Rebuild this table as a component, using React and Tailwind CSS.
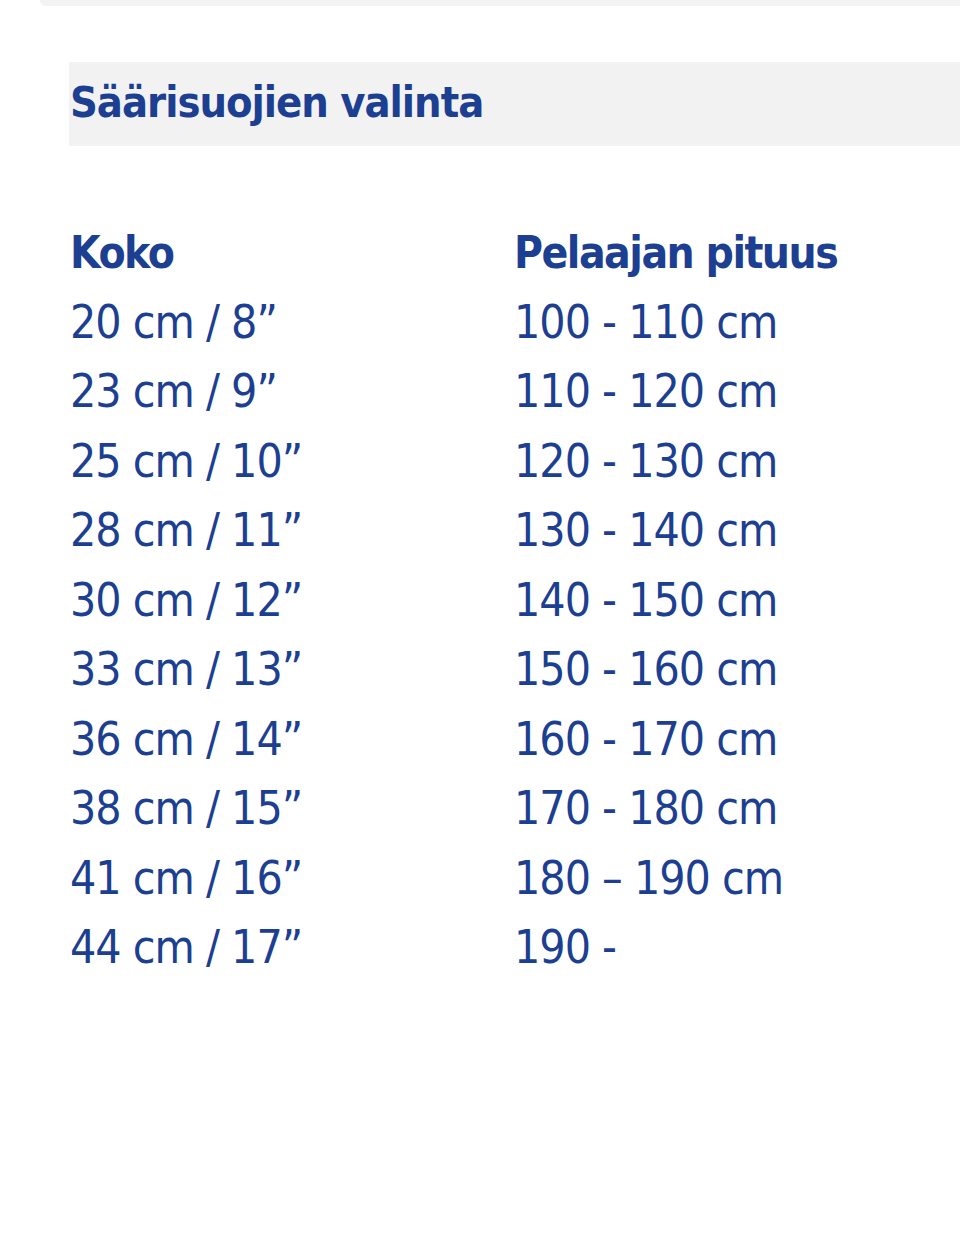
import React from 'react';

const rows = [
  ['20 cm / 8”', '100 - 110 cm'],
  ['23 cm / 9”', '110 - 120 cm'],
  ['25 cm / 10”', '120 - 130 cm'],
  ['28 cm / 11”', '130 - 140 cm'],
  ['30 cm / 12”', '140 - 150 cm'],
  ['33 cm / 13”', '150 - 160 cm'],
  ['36 cm / 14”', '160 - 170 cm'],
  ['38 cm / 15”', '170 - 180 cm'],
  ['41 cm / 16”', '180 – 190 cm'],
  ['44 cm / 17”', '190 -'],
];

const App = () => {
  return (
    <div className="w-[960px] h-[1234px] bg-white overflow-hidden text-[#1c3f92] font-['DejaVu_Sans_Condensed','DejaVu_Sans',sans-serif]">
      {/* bottom edge of the card above */}
      <div className="ml-[40px] h-[6px] bg-[#f3f3f3] rounded-bl-[20px]" />

      <div className="mt-[56px] ml-[69px] h-[84px] bg-[#f2f2f2] flex items-center">
        <h1 className="text-[43px] font-bold leading-none tracking-[-1px] pl-[1px] pb-[4px]">Säärisuojien valinta</h1>
      </div>

      <div className="mt-[72px] ml-[70px] grid grid-cols-[444px_1fr] text-[46px] leading-[69.5px] tracking-[-1px]">
        <div className="font-bold text-[44px] tracking-[-1.5px]">Koko</div>
        <div className="font-bold text-[44px] tracking-[-1.5px]">Pelaajan pituus</div>
        {rows.map(([size, height]) => (
          <React.Fragment key={size}>
            <div>{size}</div>
            <div>{height}</div>
          </React.Fragment>
        ))}
      </div>
    </div>
  );
};

export default App;
